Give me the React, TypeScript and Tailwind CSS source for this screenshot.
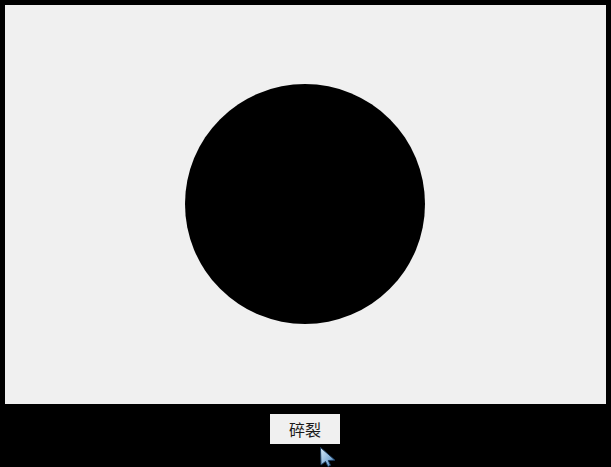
import React from 'react';

function Cursor() {
  return (
    <svg
      className="absolute left-[319px] top-[446px]"
      width="18"
      height="21"
      viewBox="0 0 18 21"
    >
      <defs>
        <linearGradient id="cur" x1="0" y1="0" x2="1" y2="1">
          <stop offset="0" stopColor="#dbeefc" />
          <stop offset="1" stopColor="#4a86c0" />
        </linearGradient>
      </defs>
      <path
        d="M1.5 1.5 L2 19 L6.5 15.5 L9 20.5 L11.5 19.3 L9.3 14.5 L16 14.2 Z"
        fill="url(#cur)"
        stroke="#1b3a5c"
        strokeWidth="1"
        strokeLinejoin="round"
      />
    </svg>
  );
}

export default function App() {
  return (
    <div className="relative w-[611px] h-[467px] bg-black flex flex-col pt-[5px] px-[5px] overflow-hidden">
      <div className="w-[601px] h-[399px] bg-[#f0f0f0] flex items-center justify-center pr-[1px] pb-[1px]">
        <div className="w-[240px] h-[240px] rounded-full bg-black" />
      </div>
      <div className="mt-[10px] flex justify-center pr-[1px]">
        <button
          className="w-[70px] h-[30px] bg-[#f0f0f0] text-[16px] text-[#1a1a1a] flex items-center justify-center"
          style={{ fontFamily: '"Noto Sans CJK SC", "Noto Sans", sans-serif' }}
        >
          碎裂
        </button>
      </div>
      <Cursor />
    </div>
  );
}
